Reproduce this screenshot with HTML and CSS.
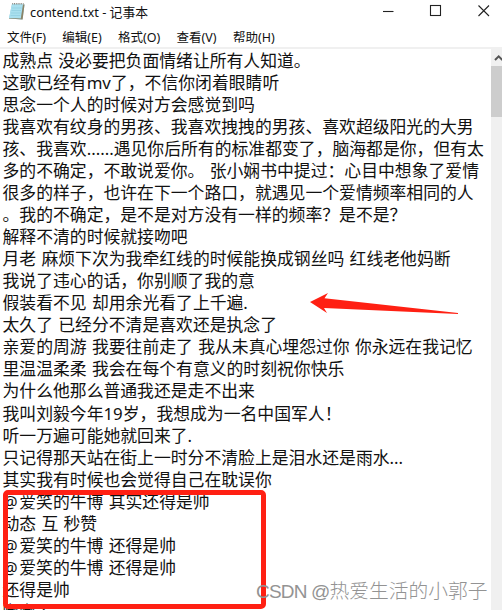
FILE: index.html
```html
<!DOCTYPE html>
<html lang="zh-CN">
<head>
<meta charset="utf-8">
<title>contend.txt - 记事本</title>
<link rel="stylesheet" href="styles.css">
</head>
<body>
<div class="window">
  <header class="titlebar">
    <svg class="app-icon" width="18" height="20" viewBox="0 0 18 20">
      <path d="M4 3 L16.5 3.5 L14.5 18.5 L1 17.5 Z" fill="#8fcbdc"/>
      <path d="M4 3 L15 3.5 L12.8 17.8 L1 17 Z" fill="#a9e0ef"/>
      <path d="M15 3.5 L16.5 3.6 L14.6 18.6 L1 17.6 L1 17 L12.8 17.6 Z" fill="#8c8468"/>
      <path d="M4 7H13.5M3.5 9.5H13M3 12H12.8M2.6 14.5H12.4" stroke="#8fcde0" stroke-width=".7"/>
      <path d="M4.2 2.8H15.6" stroke="#8b8a84" stroke-width="1.6" stroke-dasharray="1 .8"/>
    </svg>
    <span class="title">contend.txt - 记事本</span>
    <svg class="controls" width="110" height="14" viewBox="0 0 110 14" fill="none" stroke="#222" stroke-width="1.1">
      <path d="M0 7.5H10.5"/>
      <rect x="47.5" y="1.5" width="10" height="10"/>
      <path d="M95.5 1.5L106 12M106 1.5L95.5 12"/>
    </svg>
  </header>
  <nav class="menubar"><span>文件(F)</span><span>编辑(E)</span><span>格式(O)</span><span>查看(V)</span><span>帮助(H)</span></nav>
  <main class="editor">
    <div class="text">
      <p>成熟点 没必要把负面情绪让所有人知道。</p>
      <p>这歌已经有mv了，不信你闭着眼睛听</p>
      <p>思念一个人的时候对方会感觉到吗</p>
      <p>我喜欢有纹身的男孩、我喜欢拽拽的男孩、喜欢超级阳光的大男</p>
      <p>孩、我喜欢......遇见你后所有的标准都变了，脑海都是你，但有太</p>
      <p>多的不确定，不敢说爱你。 张小娴书中提过：心目中想象了爱情</p>
      <p>很多的样子，也许在下一个路口，就遇见一个爱情频率相同的人</p>
      <p>。我的不确定，是不是对方没有一样的频率？是不是？</p>
      <p>解释不清的时候就接吻吧</p>
      <p>月老 麻烦下次为我牵红线的时候能换成钢丝吗 红线老他妈断</p>
      <p>我说了违心的话，你别顺了我的意</p>
      <p>假装看不见 却用余光看了上千遍.</p>
      <p>太久了 已经分不清是喜欢还是执念了</p>
      <p>亲爱的周游 我要往前走了 我从未真心埋怨过你 你永远在我记忆</p>
      <p>里温温柔柔 我会在每个有意义的时刻祝你快乐</p>
      <p>为什么他那么普通我还是走不出来</p>
      <p>我叫刘毅今年19岁，我想成为一名中国军人！</p>
      <p>听一万遍可能她就回来了.</p>
      <p>只记得那天站在街上一时分不清脸上是泪水还是雨水...</p>
      <p>其实我有时候也会觉得自己在耽误你</p>
      <p><span class="at">@</span>爱笑的牛博 其实还得是帅</p>
      <p>动态 互 秒赞</p>
      <p><span class="at">@</span>爱笑的牛博 还得是帅</p>
      <p><span class="at">@</span>爱笑的牛博 还得是帅</p>
      <p>还得是帅</p>
      <p>嘟嘟 :</p>
    </div>
    <aside class="scrollbar">
      <svg width="11" height="17" viewBox="0 0 11 17"><path d="M4 11L7.7 7.3L11.4 11" fill="none" stroke="#555" stroke-width="2"/></svg>
      <div class="thumb"></div>
    </aside>
  </main>
  <svg class="arrow" width="150" height="22" viewBox="0 0 150 22"><path d="M0 9L18 0L14.5 5.3L148 20L148 21L14 15L17 20Z" fill="#ff2013"/></svg>
  <div class="marker"></div>
  <div class="watermark"><span class="latin">CSDN @</span>热爱生活的小郭子</div>
</div>
</body>
</html>
```
FILE: styles.css
```css
* { box-sizing: border-box; }
body { margin: 0; background: #fff; font-family: "Noto Sans", "Noto Sans CJK SC", sans-serif; color: #111; }
.window { position: relative; width: 502px; height: 610px; overflow: hidden; display: flex; flex-direction: column; }
.titlebar { height: 26px; flex: none; display: flex; align-items: center; padding: 0 9px 4px 8px; }
.app-icon { flex: none; margin-right: 4px; }
.title { font-size: 12.8px; line-height: 22px; padding-top: 2px; white-space: nowrap; }
.controls { margin-left: auto; flex: none; }
.menubar { height: 21px; flex: none; display: flex; gap: 16.3px; padding-left: 7px; font-size: 12.5px; line-height: 24px; white-space: nowrap; }
.editor { flex: 1; min-height: 0; display: flex; border-top: 2px solid #f0f0f0; }
.text { flex: 1; min-width: 0; padding: 1px 0 0 2.5px; overflow: hidden; }
.text p { margin: 0; height: 22.04px; line-height: 22.04px; font-size: 16.83px; word-spacing: .9px; white-space: nowrap; font-kerning: none; }
.at { letter-spacing: 1.6px; }
.scrollbar { width: 11px; flex: none; background: #f0f0f0; }
.scrollbar svg { display: block; }
.thumb { height: 51px; background: #cdcdcd; }
.arrow { position: absolute; left: 309.5px; top: 293px; }
.marker { position: absolute; left: 3px; top: 490px; width: 263px; height: 119px; border: 5px solid #ff2013; border-radius: 5px; }
.watermark { position: absolute; left: 256px; top: 578px; font: 300 19.75px/26px "Liberation Sans", "Noto Sans CJK SC", sans-serif; color: #939393; white-space: nowrap; }
.latin { font-size: 19px; letter-spacing: -.8px; }
```
